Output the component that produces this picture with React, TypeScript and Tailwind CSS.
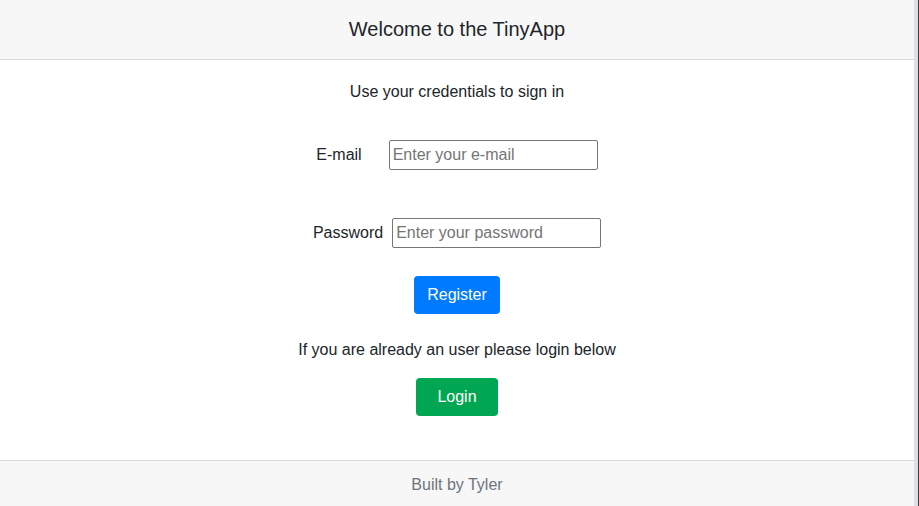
export default function App() {
  return (
    <div className="flex h-[506px] w-[919px] bg-[#3c3c3c] font-['Liberation_Sans',Arial,sans-serif] text-[#212529]">
      <div className="flex w-[914px] flex-col bg-white">
        <header className="flex h-[60px] items-center justify-center border-b border-[#d9d9d9] bg-[#f7f7f7] pb-[2px]">
          <h1 className="text-[20px] leading-[24px]">Welcome to the TinyApp</h1>
        </header>

        <main className="flex flex-1 flex-col items-center pt-[20px]">
          <p className="text-[16px] leading-[24px]">Use your credentials to sign in</p>

          <form className="mt-[36px] flex flex-col items-center">
            <div className="flex items-center">
              <label className="text-[16px] leading-[24px]">E-mail</label>
              <input
                type="email"
                placeholder="Enter your e-mail"
                className="ml-[27px] h-[30px] w-[209px] rounded-[2px] border border-[#767676] px-[3px] text-[16px] placeholder:text-[#757575]"
              />
            </div>

            <div className="mt-[48px] flex items-center">
              <label className="text-[16px] leading-[24px]">Password</label>
              <input
                type="password"
                placeholder="Enter your password"
                className="ml-[9px] h-[30px] w-[209px] rounded-[2px] border border-[#767676] px-[3px] text-[16px] placeholder:text-[#757575]"
              />
            </div>

            <button
              type="button"
              className="mt-[28px] h-[38px] w-[86px] rounded-[4px] bg-[#007bff] text-[16px] text-white"
            >
              Register
            </button>
          </form>

          <p className="mt-[24px] text-[16px] leading-[24px]">
            If you are already an user please login below
          </p>

          <button
            type="button"
            className="mt-[16px] h-[38px] w-[82px] rounded-[4px] bg-[#00a651] text-[16px] text-white"
          >
            Login
          </button>
        </main>

        <footer className="flex h-[46px] items-center justify-center border-t border-[#d9d9d9] bg-[#f7f7f7] pt-[2px] text-[16px] text-[#6c757d]">
          Built by Tyler
        </footer>
      </div>
      <div className="w-[4px] bg-[#dcdfe3]" />
    </div>
  );
}
